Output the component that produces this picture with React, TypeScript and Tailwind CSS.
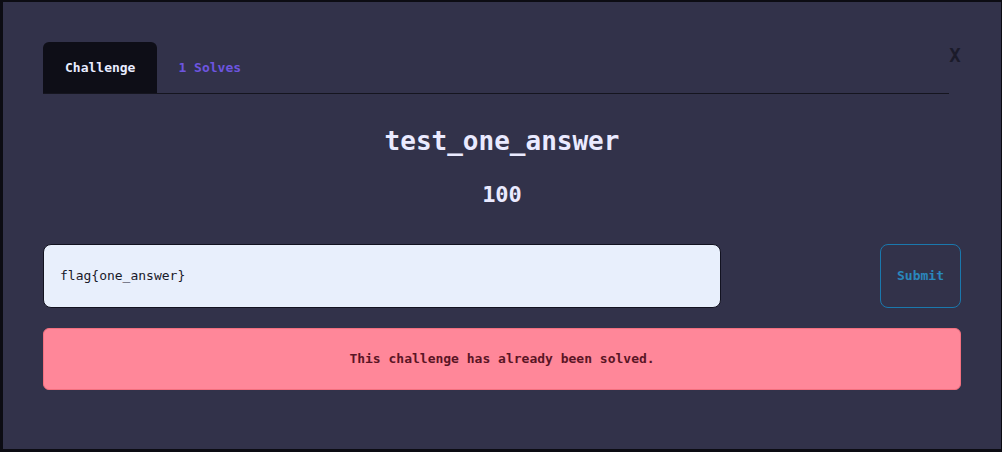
import React from 'react';

const mono = { fontFamily: '"DejaVu Sans Mono", "Liberation Mono", monospace' };

export default function App() {
  return (
    <div className="w-[1002px] h-[452px] bg-[#0c0c13] pt-[2px] pl-[3px]" style={mono}>
      <div className="w-[998px] h-[447px] bg-[#32324a] px-10 pt-10">
        {/* Tabs */}
        <div className="flex items-start">
          <div className="flex-1 flex border-b border-[#15151f] h-[52px]">
            <div className="h-[51px] px-[22px] flex items-center bg-[#0e0e17] rounded-t-[6px] text-[13px] font-bold text-[#e8ecff]">
              Challenge
            </div>
            <div className="h-[51px] px-[21px] flex items-center text-[13px] font-bold text-[#6d55e0]">
              1 Solves
            </div>
          </div>
          <button className="w-[12px] mt-[4px] text-[19px] font-bold leading-none text-center text-[#1b1b2a]">
            X
          </button>
        </div>

        {/* Title */}
        <div className="mt-[30px] text-center">
          <h2 className="text-[26px] font-bold leading-[34px] text-[#eaeaff]">test_one_answer</h2>
          <p className="mt-[23px] text-[22px] font-bold leading-[28px] text-[#eaeaff]">100</p>
        </div>

        {/* Input row */}
        <div className="mt-[35px] flex items-center justify-between">
          <div className="w-[678px] h-[64px] rounded-[8px] bg-[#e8effc] border border-[#121220] flex items-center px-4 text-[13px] text-[#1a1a2a]">
            flag{'{'}one_answer{'}'}
          </div>
          <button className="w-[81px] h-[64px] rounded-[8px] border border-[#1a78ad] text-[13px] font-bold text-[#2a87bd]">
            Submit
          </button>
        </div>

        {/* Alert */}
        <div className="mt-[20px] h-[62px] rounded-[6px] bg-[#ff8799] border border-[#f3707f] flex items-center justify-center text-[13px] font-bold text-[#5a1525]">
          This challenge has already been solved.
        </div>
      </div>
    </div>
  );
}
